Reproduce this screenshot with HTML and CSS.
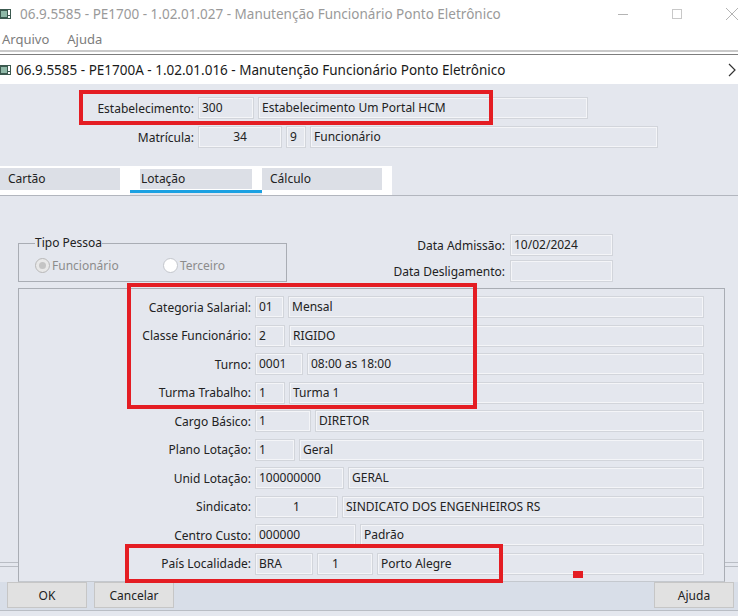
FILE: index.html
```html
<!DOCTYPE html>
<html lang="pt-BR">
<head>
    <meta charset="UTF-8">
    <title>Manutenção Funcionário Ponto Eletrônico</title>
    <link rel="stylesheet" href="styles.css">
</head>
<body>
    <!-- janela principal -->
    <div class="titlebar">
        <svg class="app-icon" width="11" height="12" viewBox="0 0 11 12">
            <rect x="0" y="1" width="11" height="10" fill="#3c5a50"/>
            <rect x="1" y="3" width="6" height="6" fill="#8fb9a8"/>
            <rect x="8" y="2" width="2" height="5" fill="#ffffff"/>
            <rect x="8" y="8" width="2" height="2" fill="#ffffff"/>
        </svg>
        <span class="title">06.9.5585 - PE1700 - 1.02.01.027 - Manutenção Funcionário Ponto Eletrônico</span>
        <div class="win-controls">
            <svg width="12" height="12" viewBox="0 0 12 12"><line x1="1" y1="6.5" x2="11" y2="6.5" stroke="#b4b4b4" stroke-width="1"/></svg>
            <svg width="12" height="12" viewBox="0 0 12 12"><rect x="1.5" y="1.5" width="9" height="9" fill="none" stroke="#c8c8c8" stroke-width="1"/></svg>
            <svg width="14" height="14" viewBox="0 0 14 14"><path d="M1 1 L13 13 M13 1 L1 13" stroke="#b4b4b4" stroke-width="1" fill="none"/></svg>
        </div>
    </div>
    <div class="menubar">
        <span>Arquivo</span>
        <span>Ajuda</span>
    </div>
    <div class="frame-sep"></div>

    <!-- janela filha -->
    <div class="child-title">
        <svg class="app-icon" width="11" height="12" viewBox="0 0 11 12">
            <rect x="0" y="1" width="11" height="10" fill="#3c5a50"/>
            <rect x="1" y="3" width="6" height="6" fill="#8fb9a8"/>
            <rect x="8" y="2" width="2" height="5" fill="#ffffff"/>
            <rect x="8" y="8" width="2" height="2" fill="#ffffff"/>
        </svg>
        <span class="title">06.9.5585 - PE1700A - 1.02.01.016 - Manutenção Funcionário Ponto Eletrônico</span>
        <svg class="chevron" width="8" height="14" viewBox="0 0 8 14"><path d="M1 1 L7 7 L1 13" stroke="#333" stroke-width="1.2" fill="none"/></svg>
    </div>

    <div class="form">
        <div class="header">
            <div class="row">
                <span class="hlabel">Estabelecimento:</span>
                <span class="field w56">300</span>
                <span class="field w330">Estabelecimento Um Portal HCM</span>
            </div>
            <div class="row">
                <span class="hlabel">Matrícula:</span>
                <span class="field w84 center">34</span>
                <span class="field w20">9</span>
                <span class="field w348">Funcionário</span>
            </div>
        </div>

        <div class="tabs">
            <div class="tab"><span>Cartão</span></div>
            <div class="tab active"><span>Lotação</span></div>
            <div class="tab"><span>Cálculo</span></div>
            <div class="tab-rest"></div>
        </div>

        <div class="tab-page">
            <div class="top">
                <fieldset class="group">
                    <legend>Tipo Pessoa</legend>
                    <label class="radio checked"><i></i>Funcionário</label>
                    <label class="radio"><i></i>Terceiro</label>
                </fieldset>
                <div class="dates">
                    <div class="row">
                        <span class="dlabel">Data Admissão:</span>
                        <span class="field w103">10/02/2024</span>
                    </div>
                    <div class="row">
                        <span class="dlabel">Data Desligamento:</span>
                        <span class="field w103"></span>
                    </div>
                </div>
            </div>

            <div class="panel">
                <div class="row">
                    <span class="plabel">Categoria Salarial:</span>
                    <span class="field w29">01</span>
                    <span class="field desc">Mensal</span>
                </div>
                <div class="row">
                    <span class="plabel">Classe Funcionário:</span>
                    <span class="field w30">2</span>
                    <span class="field desc">RIGIDO</span>
                </div>
                <div class="row">
                    <span class="plabel">Turno:</span>
                    <span class="field w48">0001</span>
                    <span class="field desc">08:00 as 18:00</span>
                </div>
                <div class="row">
                    <span class="plabel">Turma Trabalho:</span>
                    <span class="field w30">1</span>
                    <span class="field desc">Turma 1</span>
                </div>
                <div class="row">
                    <span class="plabel">Cargo Básico:</span>
                    <span class="field w56">1</span>
                    <span class="field desc">DIRETOR</span>
                </div>
                <div class="row">
                    <span class="plabel">Plano Lotação:</span>
                    <span class="field w40">1</span>
                    <span class="field desc">Geral</span>
                </div>
                <div class="row">
                    <span class="plabel">Unid Lotação:</span>
                    <span class="field w89">100000000</span>
                    <span class="field desc">GERAL</span>
                </div>
                <div class="row">
                    <span class="plabel">Sindicato:</span>
                    <span class="field w83 center">1</span>
                    <span class="field desc">SINDICATO DOS ENGENHEIROS RS</span>
                </div>
                <div class="row">
                    <span class="plabel">Centro Custo:</span>
                    <span class="field w101">000000</span>
                    <span class="field desc">Padrão</span>
                </div>
                <div class="row">
                    <span class="plabel">País Localidade:</span>
                    <span class="field w58">BRA</span>
                    <span class="field w56 indent">1</span>
                    <span class="field desc">Porto Alegre</span>
                </div>
            </div>
        </div>

        <div class="buttons">
            <button>OK</button>
            <button>Cancelar</button>
            <button class="right">Ajuda</button>
        </div>
    </div>

    <!-- marcações em vermelho -->
    <div class="mark mark-estab"></div>
    <div class="mark mark-lotacao"></div>
    <div class="mark mark-pais"></div>
    <div class="mark-dot"></div>
</body>
</html>
```

FILE: styles.css
```css
body {
    margin: 0;
    font-family: "Noto Sans", "Open Sans", sans-serif;
    font-size: 12px;
    color: #222;
    background-color: #f0f0f0;
    width: 738px;
    height: 616px;
    overflow: hidden;
    position: relative;
}
.titlebar {
    height: 27px;
    background-color: #fff;
    display: flex;
    align-items: center;
}
.titlebar .app-icon {
    margin-left: 0;
    margin-right: 9px;
}
.titlebar .title {
    font-size: 13.5px;
    color: #9a9a9a;
}
.win-controls {
    margin-left: auto;
    display: flex;
    align-items: center;
    gap: 42px;
    margin-right: -1px;
}
.menubar {
    height: 23px;
    background-color: #fff;
    display: flex;
    align-items: center;
    gap: 18px;
    padding-left: 2px;
    color: #7c7c7c;
    font-size: 13px;
}
.frame-sep {
    height: 2px;
    border-top: 2px solid #c9c9c9;
    border-bottom: 1px solid #7d7d7d;
    background-color: #fff;
}
.child-title {
    height: 29px;
    background-color: #fff;
    display: flex;
    align-items: center;
}
.child-title .app-icon {
    margin-right: 5px;
}
.child-title .title {
    font-size: 13.5px;
    color: #1a1a1a;
}
.child-title .chevron {
    margin-left: auto;
    margin-right: 2px;
}
.form {
    background-color: #e4e7ee;
    height: 532px;
    display: flex;
    flex-direction: column;
}
.header {
    padding-top: 13px;
    display: flex;
    flex-direction: column;
    gap: 7px;
    height: 69px;
}
.row {
    display: flex;
    align-items: center;
    gap: 4px;
    height: 22px;
}
.hlabel {
    width: 194px;
    text-align: right;
}
.field {
    box-sizing: border-box;
    height: 22px;
    line-height: 20px;
    padding: 0 3px;
    border: 1px solid #d2d5db;
    box-shadow: inset 0 0 0 1px #f4f5f8;
    background-color: #e4e7ee;
    white-space: nowrap;
    overflow: hidden;
}
.field.center {
    text-align: center;
}
.field.indent {
    padding-left: 14px;
}
.field.desc {
    flex: 1;
}
.w20 { width: 20px; }
.w29 { width: 29px; }
.w30 { width: 30px; }
.w40 { width: 40px; }
.w48 { width: 48px; }
.w56 { width: 56px; }
.w58 { width: 58px; }
.w83 { width: 83px; }
.w84 { width: 84px; }
.w89 { width: 89px; }
.w101 { width: 101px; }
.w103 { width: 103px; }
.w330 { width: 330px; }
.w348 { width: 348px; }

/* abas */
.tabs {
    height: 29px;
    display: flex;
    border-bottom: 1px solid #b2b6be;
}
.tab {
    box-sizing: border-box;
    width: 130px;
    background-color: #fff;
    padding: 2px 10px 5px 0;
}
.tab span {
    display: block;
    height: 22px;
    line-height: 22px;
    background-color: #dcdfe6;
    padding-left: 8px;
}
.tab.active {
    width: 132px;
    padding: 3px 10px 4px 10px;
    border-bottom: 3px solid #1ba1e2;
    height: 27px;
}
.tab.active span {
    height: 20px;
    line-height: 20px;
    padding-left: 1px;
}
.tab:last-of-type {
    width: 133px;
    padding-left: 3px;
}
.tab-rest {
    flex: 1;
    background-color: #e4e7ee;
}

.tab-page {
    height: 386px;
    box-sizing: border-box;
    padding-top: 38px;
    display: flex;
    flex-direction: column;
    position: relative;
}
/* borda inferior da página, escondida atrás do painel */
.tab-page::after {
    content: "";
    position: absolute;
    left: 0;
    right: 0;
    top: 366px;
    height: 3px;
    border-top: 1px solid #b9bdc4;
    border-bottom: 1px solid #b9bdc4;
}
.top {
    display: flex;
    align-items: flex-start;
}
.group {
    box-sizing: border-box;
    min-width: 0;
    margin: 3px 0 0 18px;
    width: 269px;
    height: 45px;
    border: 1px solid #a9adb4;
    padding: 0 0 0 16px;
    display: flex;
    align-items: center;
}
.group legend {
    padding: 0;
    line-height: 12px;
    color: #222;
}
.radio {
    display: flex;
    align-items: center;
    color: #8c8c8c;
    margin-top: 1px;
}
.radio.checked {
    width: 128px;
}
.radio i {
    box-sizing: border-box;
    width: 15px;
    height: 15px;
    border-radius: 50%;
    border: 1px solid #c3c6cc;
    background-color: #fff;
    margin-right: 2px;
    position: relative;
}
.radio.checked i {
    background-color: #e8e8e8;
    border-color: #b8b8b8;
}
.radio.checked i::after {
    content: "";
    position: absolute;
    left: 3px;
    top: 3px;
    width: 7px;
    height: 7px;
    border-radius: 50%;
    background-color: #c4c4c4;
}
.dates {
    margin-left: 18px;
    display: flex;
    flex-direction: column;
    gap: 4px;
}
.dates .row {
    gap: 5px;
}
.dlabel {
    width: 200px;
    text-align: right;
}
.panel {
    position: relative;
    z-index: 1;
    margin: 6px 0 0 18px;
    width: 707px;
    flex: 1;
    box-sizing: border-box;
    border: 1px solid #a9adb4;
    border-bottom-color: #c4c8ce;
    background-color: #e4e7ee;
    padding: 7px 20px 0 0;
    display: flex;
    flex-direction: column;
    gap: 6.5px;
}
.plabel {
    width: 232px;
    text-align: right;
}

/* botões */
.buttons {
    height: 28px;
    background-color: #d8dee8;
    display: flex;
    align-items: flex-start;
    gap: 7px;
    padding-left: 7px;
    border-bottom: 1px solid #b9bdc4;
}
.buttons button {
    width: 80px;
    height: 26px;
    font-family: inherit;
    font-size: 12px;
    color: #222;
    background-color: #e1e1e1;
    border: 1px solid #c6c6c6;
    padding: 0;
}
.buttons .right {
    margin-left: auto;
    margin-right: 4px;
}

.mark {
    position: absolute;
    box-sizing: border-box;
    border: 4px solid #e41d23;
    z-index: 5;
}
.mark-estab {
    left: 79px;
    top: 90px;
    width: 414px;
    height: 35px;
}
.mark-lotacao {
    left: 127px;
    top: 283px;
    width: 350px;
    height: 126px;
}
.mark-pais {
    left: 125px;
    top: 544px;
    width: 378px;
    height: 39px;
}
.mark-dot {
    position: absolute;
    left: 573px;
    top: 571px;
    width: 10px;
    height: 7px;
    background-color: #e41d23;
    z-index: 5;
}
```
